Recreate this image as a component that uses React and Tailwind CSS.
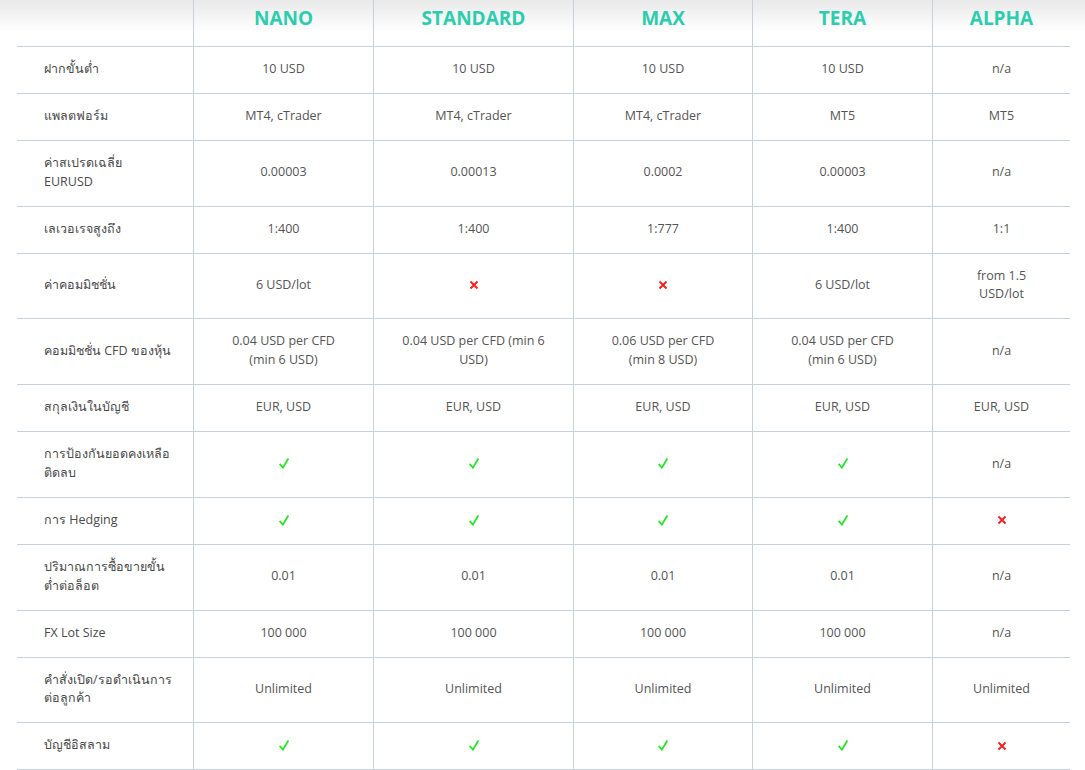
import React from "react";

const CHECK = "__check__";
const CROSS = "__cross__";

const headers = ["NANO", "STANDARD", "MAX", "TERA", "ALPHA"];

const rows = [
  [["ฝากขั้นต่ำ"], "10 USD", "10 USD", "10 USD", "10 USD", "n/a"],
  [["แพลตฟอร์ม"], "MT4, cTrader", "MT4, cTrader", "MT4, cTrader", "MT5", "MT5"],
  [["ค่าสเปรดเฉลี่ย", "EURUSD"], "0.00003", "0.00013", "0.0002", "0.00003", "n/a"],
  [["เลเวอเรจสูงถึง"], "1:400", "1:400", "1:777", "1:400", "1:1"],
  [["ค่าคอมมิชชั่น"], "6 USD/lot", CROSS, CROSS, "6 USD/lot", ["from 1.5", "USD/lot"]],
  [
    ["คอมมิชชั่น CFD ของหุ้น"],
    ["0.04 USD per CFD", "(min 6 USD)"],
    ["0.04 USD per CFD (min 6", "USD)"],
    ["0.06 USD per CFD", "(min 8 USD)"],
    ["0.04 USD per CFD", "(min 6 USD)"],
    "n/a",
  ],
  [["สกุลเงินในบัญชี"], "EUR, USD", "EUR, USD", "EUR, USD", "EUR, USD", "EUR, USD"],
  [["การป้องกันยอดคงเหลือ", "ติดลบ"], CHECK, CHECK, CHECK, CHECK, "n/a"],
  [["การ Hedging"], CHECK, CHECK, CHECK, CHECK, CROSS],
  [["ปริมาณการซื้อขายขั้น", "ต่ำต่อล็อต"], "0.01", "0.01", "0.01", "0.01", "n/a"],
  [["FX Lot Size"], "100 000", "100 000", "100 000", "100 000", "n/a"],
  [["คำสั่งเปิด/รอดำเนินการ", "ต่อลูกค้า"], "Unlimited", "Unlimited", "Unlimited", "Unlimited", "Unlimited"],
  [["บัญชีอิสลาม"], CHECK, CHECK, CHECK, CHECK, CROSS],
];

function Check() {
  return (
    <svg width="10" height="11" viewBox="0 0 10 11" className="block">
      <path d="M1.2 6.6 L3.9 9.6 L9 1.2" fill="none" stroke="#1fe81f" strokeWidth="1.8" strokeLinecap="square" strokeLinejoin="miter" />
    </svg>
  );
}

function Cross() {
  return (
    <svg width="10" height="10" viewBox="0 0 10 10" className="block">
      <path d="M1.5 1.5 L8.5 8.5 M8.5 1.5 L1.5 8.5" fill="none" stroke="#ff1616" strokeWidth="1.8" />
    </svg>
  );
}

function CellContent({ value }) {
  if (value === CHECK) return <Check />;
  if (value === CROSS) return <Cross />;
  const lines = Array.isArray(value) ? value : [value];
  return (
    <div className="text-center">
      {lines.map((l, i) => (
        <div key={i} className="whitespace-nowrap">
          {l}
        </div>
      ))}
    </div>
  );
}

export default function App() {
  return (
    <div
      className="min-h-[770px] w-full bg-[linear-gradient(to_bottom,#e9e9e9_0px,#ffffff_32px)] pl-[17px] pr-[15px] text-[#555555]"
      style={{ fontFamily: '"Open Sans", "Noto Sans", sans-serif' }}
    >
      <div className="grid grid-cols-[176px_180px_200px_179px_180px_138px]">
        {/* header */}
        <div className="h-[47px] border-b border-[#c6d1da]" />
        {headers.map((h) => (
          <div
            key={h}
            className="flex h-[47px] items-start justify-center border-b border-l border-[#c6d1da] pt-[4px] text-[19px] font-bold leading-[28px] text-[#2ccdae]"
          >
            {h}
          </div>
        ))}

        {rows.map((row, ri) => (
          <React.Fragment key={ri}>
            <div className="flex items-center border-b border-[#c6d1da] pt-[13px] pb-[14px] pl-[27px] text-[12.5px] leading-[18.9px] text-[#4a4a4a]">
              <div>
                {row[0].map((l, i) => (
                  <div key={i} className="whitespace-nowrap">
                    {l}
                  </div>
                ))}
              </div>
            </div>
            {row.slice(1).map((v, ci) => (
              <div
                key={ci}
                className="flex items-center justify-center border-b border-l border-[#c6d1da] pt-[13px] pb-[14px] text-[12.5px] leading-[18.9px]"
              >
                <CellContent value={v} />
              </div>
            ))}
          </React.Fragment>
        ))}
      </div>
    </div>
  );
}
